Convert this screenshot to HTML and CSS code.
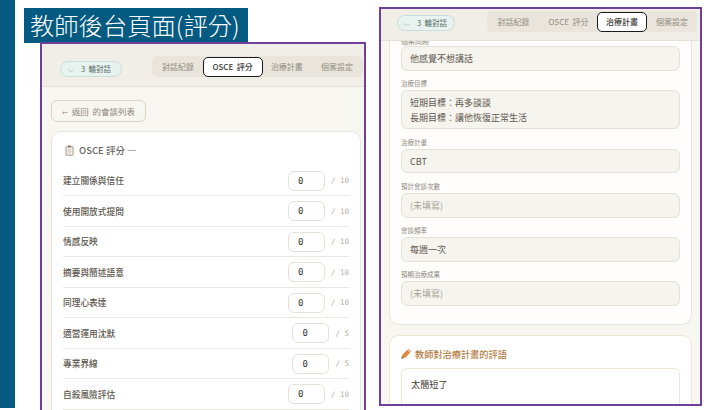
FILE: index.html
```html
<!DOCTYPE html>
<html lang="zh-Hant">
<head>
<meta charset="utf-8">
<title>教師後台頁面(評分)</title>
<link rel="stylesheet" href="styles.css">
</head>
<body>
<div class="slide">
  <div class="side-bar"></div>
  <h1 class="title">教師後台頁面(評分)</h1>

  <section class="window window-left">
    <header class="topbar topbar-left">
      <span class="pill"><svg class="moon" viewBox="0 0 12 12"><path d="M2 5 A4.2 4.2 0 0 0 10 6.5 A3.6 3.6 0 0 1 2 5Z"/></svg><span>3&nbsp; 輪對話</span></span>
      <nav class="tabs tabs-left">
        <span class="tab">對話紀錄</span>
        <span class="tab active">OSCE&nbsp; 評分</span>
        <span class="tab">治療計畫</span>
        <span class="tab">個案設定</span>
      </nav>
    </header>
    <div class="content-left">
      <button class="back"><span class="arrow">←</span> 返回&nbsp; 的會談列表</button>
      <div class="card score-card">
        <h2 class="score-title"><svg class="clip" viewBox="0 0 12 14"><rect x="1" y="1.5" width="10" height="12" rx="1" fill="#d9cfc0" stroke="#8c8478" stroke-width=".7"/><rect x="2.5" y="3.5" width="7" height="8.5" fill="#f6f3ee"/><rect x="4" y="0.5" width="4" height="2.2" fill="#77706a"/><path d="M3.5 6h5M3.5 8h5M3.5 10h4" stroke="#a59c90" stroke-width=".7"/></svg>OSCE 評分 —</h2>
        <div class="row"><span class="row-label">建立關係與信任</span><span class="score"><span class="num">0</span><span class="max">/ 10</span></span></div>
        <div class="row"><span class="row-label">使用開放式提問</span><span class="score"><span class="num">0</span><span class="max">/ 10</span></span></div>
        <div class="row"><span class="row-label">情感反映</span><span class="score"><span class="num">0</span><span class="max">/ 10</span></span></div>
        <div class="row"><span class="row-label">摘要與簡述語意</span><span class="score"><span class="num">0</span><span class="max">/ 10</span></span></div>
        <div class="row"><span class="row-label">同理心表達</span><span class="score"><span class="num">0</span><span class="max">/ 10</span></span></div>
        <div class="row"><span class="row-label">適當運用沈默</span><span class="score"><span class="num">0</span><span class="max">/ 5</span></span></div>
        <div class="row"><span class="row-label">專業界線</span><span class="score"><span class="num">0</span><span class="max">/ 5</span></span></div>
        <div class="row"><span class="row-label">自殺風險評估</span><span class="score"><span class="num">0</span><span class="max">/ 10</span></span></div>
      </div>
    </div>
  </section>

  <section class="window window-right">
    <header class="topbar topbar-right">
      <span class="pill"><svg class="moon" viewBox="0 0 12 12"><path d="M2 5 A4.2 4.2 0 0 0 10 6.5 A3.6 3.6 0 0 1 2 5Z"/></svg><span>3&nbsp; 輪對話</span></span>
      <nav class="tabs tabs-right">
        <span class="tab">對話紀錄</span>
        <span class="tab">OSCE&nbsp; 評分</span>
        <span class="tab active">治療計畫</span>
        <span class="tab">個案設定</span>
      </nav>
    </header>
    <div class="content-right">
      <div class="card plan-card">
        <div class="clip-label">個案問題</div>
        <div class="field">他感覺不想講話</div>
        <div class="label">治療目標</div>
        <div class="field tall">短期目標：再多談談<br>長期目標：讓他恢復正常生活</div>
        <div class="label">治療計畫</div>
        <div class="field">CBT</div>
        <div class="label">預計會談次數</div>
        <div class="field empty">(未填寫)</div>
        <div class="label">會談頻率</div>
        <div class="field">每週一次</div>
        <div class="label">預期治療成果</div>
        <div class="field empty">(未填寫)</div>
      </div>
      <div class="card comment-card">
        <h2 class="comment-title"><svg class="pencil" viewBox="0 0 12 12"><path d="M0.5 11.5 L1.6 7 L7.6 1 L11 4.4 L5 10.4Z" fill="#d98a3f"/><path d="M8.4 .6 L9.4 .2 L11.8 2.6 L11.4 3.6Z" fill="#c8553d"/><path d="M0.5 11.5 L1 9.4 L2.6 11Z" fill="#6b4a2c"/></svg>教師對治療計畫的評語</h2>
        <div class="comment-box">太簡短了</div>
      </div>
    </div>
  </section>
</div>
</body>
</html>
```
FILE: styles.css
```css
* { box-sizing: border-box; }
html, body { margin: 0; padding: 0; background: #fff; }
body { font-family: "Noto Sans CJK TC", "Noto Sans", sans-serif; overflow: hidden; }

.slide { position: relative; width: 728px; height: 410px; overflow: hidden; background: #fff; }
.side-bar { position: absolute; left: 0; top: 0; width: 15px; height: 408px; background: #045a80; }
.title {
  position: absolute; left: 24px; top: 8px; width: 224px; height: 35px; margin: 0;
  background: #045a80; color: #fff; font-weight: 300; font-size: 24.3px; line-height: 34px;
  padding-left: 6px; white-space: nowrap;
  font-family: "Noto Sans CJK TC", sans-serif;
}

.window { position: absolute; border: 2px solid #6f3f9e; background: #f8f6f1; overflow: hidden; }
.window-left { left: 40px; top: 42px; width: 326px; height: 376px; }
.window-right { left: 379px; top: 7px; width: 323px; height: 399px; }

.topbar { position: relative; z-index: 1; display: flex; align-items: center; background: #f1eee7; border-bottom: 1px solid #e6e1d7; }
.topbar-left { height: 43px; padding: 3px 0 0 18px; }
.topbar-right { height: 32px; padding: 0 0 6px 16px; }

.pill {
  display: inline-flex; align-items: center; gap: 6px; height: 16px; padding: 0 0 0 5px;
  background: #e8f2ee; border: 1px solid #c9ded8; border-radius: 9px; margin-top: 2px;
  font-size: 7.5px; color: #5b6f6a; white-space: nowrap;
}
.topbar-left .pill { width: 62px; padding-left: 6px; margin-top: 4px; }
.topbar-right .pill { width: 58px; }
.moon { width: 8px; height: 8px; fill: #9fb5b3; }

.tabs { display: flex; align-items: center; height: 21px; background: #e9e5dc; border-radius: 5px; font-size: 8px; color: #918b80; }
.tabs-left { margin-left: 30px; width: 211px; padding-left: 10px; }
.tabs-right { margin-left: 32px; width: 210px; padding-left: 10px; }
.tab { white-space: nowrap; height: 20px; line-height: 20px; text-align: center; }
.tabs-left .tab { width: 41px; text-align: left; }
.tabs-left .tab.active { width: 60px; text-align: center; }
.tabs-left .tab:nth-child(3) { width: 49px; text-align: center; }
.tabs-left .tab:nth-child(4) { width: 52px; text-align: center; }
.tabs-right .tab { width: 50px; }
.tabs-right .tab:first-child { width: 33px; margin-right: 10px; }
.tabs-right .tab:nth-child(2) { width: 57px; }
.tab.active {
  background: #fff; border: 1.5px solid #1a1a1a; border-radius: 5px; color: #3c3833;
  line-height: 17px; font-weight: 500;
}

.content-left { padding: 13px 3px 0 9px; }
.back {
  display: block; width: 95px; height: 22px; padding: 0; margin: 0 0 9px 0;
  background: #f8f6f1; border: 1px solid #d9d3c6; border-radius: 6px;
  font: 400 8.5px "Noto Sans CJK TC", sans-serif; color: #8a8378;
}
.arrow { font-size: 6px; margin-right: 2px; }

.card { background: #fff; border: 1px solid #e9e5db; border-radius: 10px; }
.score-card { padding: 8px 11px 0 11px; height: 300px; }
.score-title {
  display: flex; align-items: center; gap: 5px; margin: 0 0 5.5px 2px; height: 20px;
  font-size: 9.5px; font-weight: 500; color: #6d675f;
}
.clip { width: 9px; height: 11px; }
.row {
  display: flex; align-items: center; justify-content: space-between; height: 30.5px; padding-top: 1px;
  border-bottom: 1px solid #ece8df;
}
.row-label { font-size: 8.7px; font-weight: 500; color: #5c564d; }
.score { display: flex; align-items: center; }
.num {
  width: 37px; height: 20px; padding-left: 9px; background: #fff; border: 1px solid #e6e1d7; border-radius: 6px;
  font: 400 9px/18px "DejaVu Sans Mono", monospace; color: #333;
}
.max { margin-left: 6px; font: 400 7.5px "DejaVu Sans Mono", monospace; color: #b5b0a6; white-space: pre; }

.content-right { padding: 0 8px; display: flex; flex-direction: column; gap: 10px; margin-top: -4px; }
.plan-card { border-top: 0; border-radius: 0 0 10px 10px; padding: 0 11px 0 11px; height: 288px; background: #fefdfb; }
.clip-label { height: 9px; font-size: 7px; line-height: 9px; color: #8f8a80; }
.label { font-size: 6.5px; line-height: 9px; margin: 8.6px 0 2px 0; color: #8f8a80; height: 9px; }
.field {
  height: 24.6px; padding-left: 8px; background: #f6f4ef; border: 1px solid #e6e1d6; border-radius: 6px;
  font-size: 9px; line-height: 23.5px; color: #5d574e;
}
.field.tall { height: 39px; line-height: 15px; padding-top: 4px; }
.field.empty { color: #a8a297; }
.comment-card { padding: 8px 11px 0 11px; height: 100px; border-color: #efe6d3; }
.comment-title {
  display: flex; align-items: center; gap: 4px; margin: 0 0 4px 0; height: 20px;
  font-size: 9.2px; font-weight: 500; color: #b57d45;
}
.pencil { width: 10px; height: 10px; }
.comment-box {
  height: 60px; padding: 7px 9px; background: #fff; border: 1px solid #efe6d3; border-radius: 6px;
  font-size: 9.2px; line-height: 16px; color: #3f3b36;
}
```
